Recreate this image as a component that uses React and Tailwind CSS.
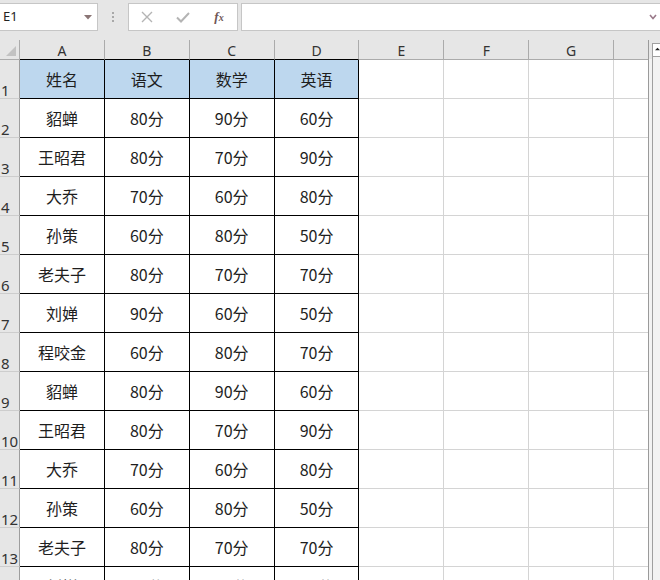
import React from "react";

const COLS = ["A", "B", "C", "D", "E", "F", "G"];
const DATA = [
  ["姓名", "语文", "数学", "英语"],
  ["貂蝉", "80分", "90分", "60分"],
  ["王昭君", "80分", "70分", "90分"],
  ["大乔", "70分", "60分", "80分"],
  ["孙策", "60分", "80分", "50分"],
  ["老夫子", "80分", "70分", "70分"],
  ["刘婵", "90分", "60分", "50分"],
  ["程咬金", "60分", "80分", "70分"],
  ["貂蝉", "80分", "90分", "60分"],
  ["王昭君", "80分", "70分", "90分"],
  ["大乔", "70分", "60分", "80分"],
  ["孙策", "60分", "80分", "50分"],
  ["老夫子", "80分", "70分", "70分"],
  ["刘婵", "90分", "60分", "50分"],
];

const cjk = { fontFamily: '"Noto Sans CJK SC", "Noto Sans", sans-serif' };
const latin = { fontFamily: '"Noto Sans", "Liberation Sans", sans-serif' };

function TopBar() {
  return (
    <div className="h-[40px] bg-[#e6e6e6] flex items-start pt-[3px] shrink-0">
      <div className="w-[98px] h-[28px] bg-white border border-l-0 border-[#c6c6c6] flex items-center justify-between pl-[3px] pr-[5px]">
        <span className="text-[13px] text-[#222]" style={latin}>E1</span>
        <svg width="8" height="5" viewBox="0 0 8 5"><path d="M0 0 L8 0 L4 4.5 Z" fill="#8a7575" /></svg>
      </div>
      <div className="w-[30px] h-[28px] flex flex-col items-center justify-center gap-[2px]">
        <div className="w-[2px] h-[2px] bg-[#a8a8a8]" />
        <div className="w-[2px] h-[2px] bg-[#a8a8a8]" />
        <div className="w-[2px] h-[2px] bg-[#a8a8a8]" />
      </div>
      <div className="w-[110px] h-[28px] bg-white border border-[#c6c6c6] flex items-center">
        <div className="w-[36px] flex justify-center">
          <svg width="12" height="12" viewBox="0 0 12 12"><path d="M1 1 L11 11 M11 1 L1 11" stroke="#b4b4b4" strokeWidth="1.4" /></svg>
        </div>
        <div className="w-[36px] flex justify-center">
          <svg width="14" height="11" viewBox="0 0 14 11"><path d="M1 5.5 L5 9.5 L13 1" stroke="#b4b4b4" strokeWidth="2" fill="none" /></svg>
        </div>
        <div className="w-[36px] flex justify-center">
          <span className="italic text-[13px] text-[#6f5656] font-semibold" style={{ fontFamily: '"Liberation Serif", "DejaVu Serif", serif' }}>f<span className="text-[10px]">x</span></span>
        </div>
      </div>
      <div className="ml-[3px] flex-1 h-[28px] bg-white border border-r-0 border-[#c6c6c6] flex items-center justify-end pr-[3px]">
        <svg width="8" height="6" viewBox="0 0 8 6"><path d="M1 1 L4 4.5 L7 1" stroke="#9a7a8a" strokeWidth="1.6" fill="none" /></svg>
      </div>
    </div>
  );
}

function HeaderRow() {
  return (
    <div className="flex h-[20px] bg-[#e6e6e6]">
      <div className="w-[20px] h-[20px] border-r border-b border-[#ababab] relative flex items-end justify-end pr-[3px] pb-[3px]">
        <svg width="10" height="10" viewBox="0 0 10 10"><path d="M10 0 L10 10 L0 10 Z" fill="#c2c2c2" /></svg>
      </div>
      {COLS.map((c, i) => (
        <div
          key={c}
          className={
            "w-[85px] h-[20px] border-r border-[#ababab] border-b flex items-center justify-center pt-[2px] text-[14px] text-[#333] " +
            (i < 4 ? "border-b-black" : "border-b-[#ababab]")
          }
          style={latin}
        >
          {c}
        </div>
      ))}
      <div className="w-[34px] h-[20px] border-b border-[#ababab]" />
    </div>
  );
}

function DataRow({ n, cells }) {
  const header = n === 1;
  return (
    <div className="flex h-[39px] shrink-0">
      <div className="w-[20px] h-[39px] bg-[#e6e6e6] border-r border-r-[#9e9e9e] border-b border-b-[#cdcdcd] flex items-end pl-[1px] text-[15px] leading-none text-[#333]" style={latin}>
        {n}
      </div>
      {cells.map((t, i) => (
        <div
          key={i}
          className={
            "w-[85px] h-[39px] border-r border-b border-black flex items-center justify-center text-[16px] text-[#1e1e1e] " +
            (header ? "bg-[#bdd7ee]" : "bg-white")
          }
          style={cjk}
        >
          {t}
        </div>
      ))}
      {[0, 1, 2].map((i) => (
        <div key={"e" + i} className="w-[85px] h-[39px] border-r border-b border-[#d4d4d4] bg-white" />
      ))}
      <div className="w-[34px] h-[39px] border-b border-[#d4d4d4] bg-white" />
    </div>
  );
}

function ScrollBar() {
  return (
    <div className="w-[11px] relative bg-[#f3f3f3] flex flex-col">
      <div className="h-[19px] bg-[#e6e6e6]" />
      <div className="absolute left-[3px] top-[3px] right-0 bottom-0 border-l border-t border-[#a0a0a0] bg-[#f3f3f3]">
        <div className="h-[13px] border-b border-[#a0a0a0] bg-white flex items-start pl-[2px] pt-[3px]">
          <svg width="8" height="4" viewBox="0 0 8 4"><path d="M0 4 L4 0 L8 4 Z" fill="#222" /></svg>
        </div>
      </div>
    </div>
  );
}

export default function App() {
  return (
    <div className="w-[660px] h-[580px] overflow-hidden bg-[#e6e6e6] flex flex-col">
      <TopBar />
      <div className="flex flex-1 min-h-0">
        <div className="w-[649px] flex flex-col border-r border-[#9a9a9a] overflow-hidden">
          <HeaderRow />
          {DATA.map((cells, i) => (
            <DataRow key={i} n={i + 1} cells={cells} />
          ))}
        </div>
        <ScrollBar />
      </div>
    </div>
  );
}
